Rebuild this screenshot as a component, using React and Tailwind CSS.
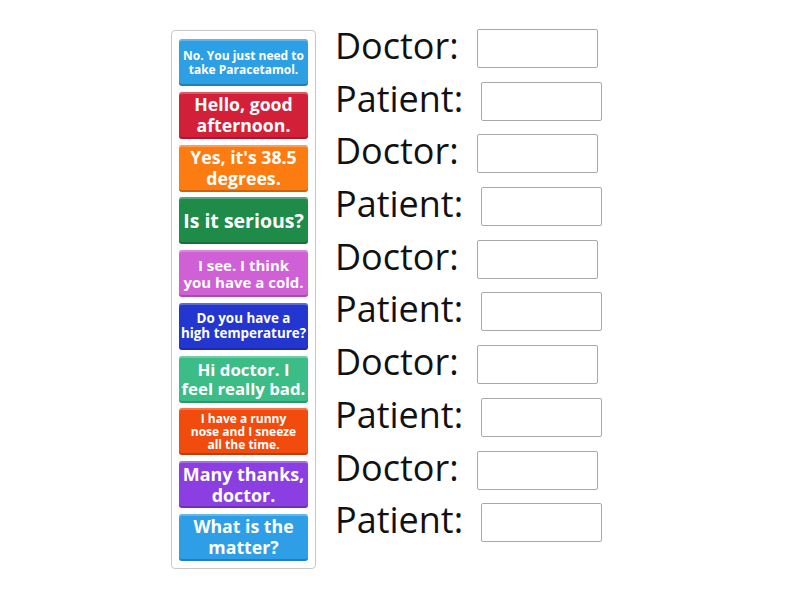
const tiles = [
  { lines: ["No. You just need to", "take Paracetamol."], bg: "bg-[#2c9fe5]", size: "text-[12px] leading-[14px]" },
  { lines: ["Hello, good", "afternoon."], bg: "bg-[#d32039]", size: "text-[17.7px] leading-[21px]" },
  { lines: ["Yes, it's 38.5", "degrees."], bg: "bg-[#fd7c12]", size: "text-[17.7px] leading-[21px]" },
  { lines: ["Is it serious?"], bg: "bg-[#1f8b49]", size: "text-[19.5px] leading-[22px]" },
  { lines: ["I see. I think", "you have a cold."], bg: "bg-[#d060d6]", size: "text-[15px] leading-[17px]" },
  { lines: ["Do you have a", "high temperature?"], bg: "bg-[#2337d0]", size: "text-[13.4px] leading-[15px]" },
  { lines: ["Hi doctor. I", "feel really bad."], bg: "bg-[#3cbc86]", size: "text-[16.8px] leading-[19px]" },
  { lines: ["I have a runny", "nose and I sneeze", "all the time."], bg: "bg-[#f14b0d]", size: "text-[12px] leading-[13px]" },
  { lines: ["Many thanks,", "doctor."], bg: "bg-[#8b3ee2]", size: "text-[17.9px] leading-[21px]" },
  { lines: ["What is the", "matter?"], bg: "bg-[#2e9ee6]", size: "text-[17.7px] leading-[21px]" },
];

const rows = ["Doctor:", "Patient:", "Doctor:", "Patient:", "Doctor:", "Patient:", "Doctor:", "Patient:", "Doctor:", "Patient:"];

export default function App() {
  return (
    <div className="w-[800px] h-[600px] bg-white flex" style={{ fontFamily: '"Open Sans", sans-serif' }}>
      {/* tile pool */}
      <div className="ml-[171px] mt-[30px] w-[145px] h-[539px] border border-[#c8c8c8] rounded-[4px] px-[7px] pt-[8px] flex flex-col gap-[5.75px]">
        {tiles.map((t, i) => (
          <div
            key={i}
            className={`${t.bg} ${t.size} h-[47px] rounded-[3px] flex flex-col items-center justify-center text-center text-white font-bold whitespace-nowrap shadow-[inset_0_2px_0_rgba(255,255,255,0.25),inset_0_-2px_0_rgba(0,0,0,0.2)]`}
          >
            {t.lines.map((l, j) => (
              <span key={j}>{l}</span>
            ))}
          </div>
        ))}
      </div>

      {/* answer rows */}
      <div className="ml-[19px] mt-[28px] flex flex-col">
        {rows.map((r, i) => (
          <div key={i} className="h-[52.7px] flex items-start">
            <span className="text-[36px] leading-[38px] text-[#111] mt-[-1px]">{r}</span>
            <div className="ml-[18px] mt-[1px] w-[121px] h-[39px] border border-[#a9a9a9] rounded-[2px] bg-white" />
          </div>
        ))}
      </div>
    </div>
  );
}
